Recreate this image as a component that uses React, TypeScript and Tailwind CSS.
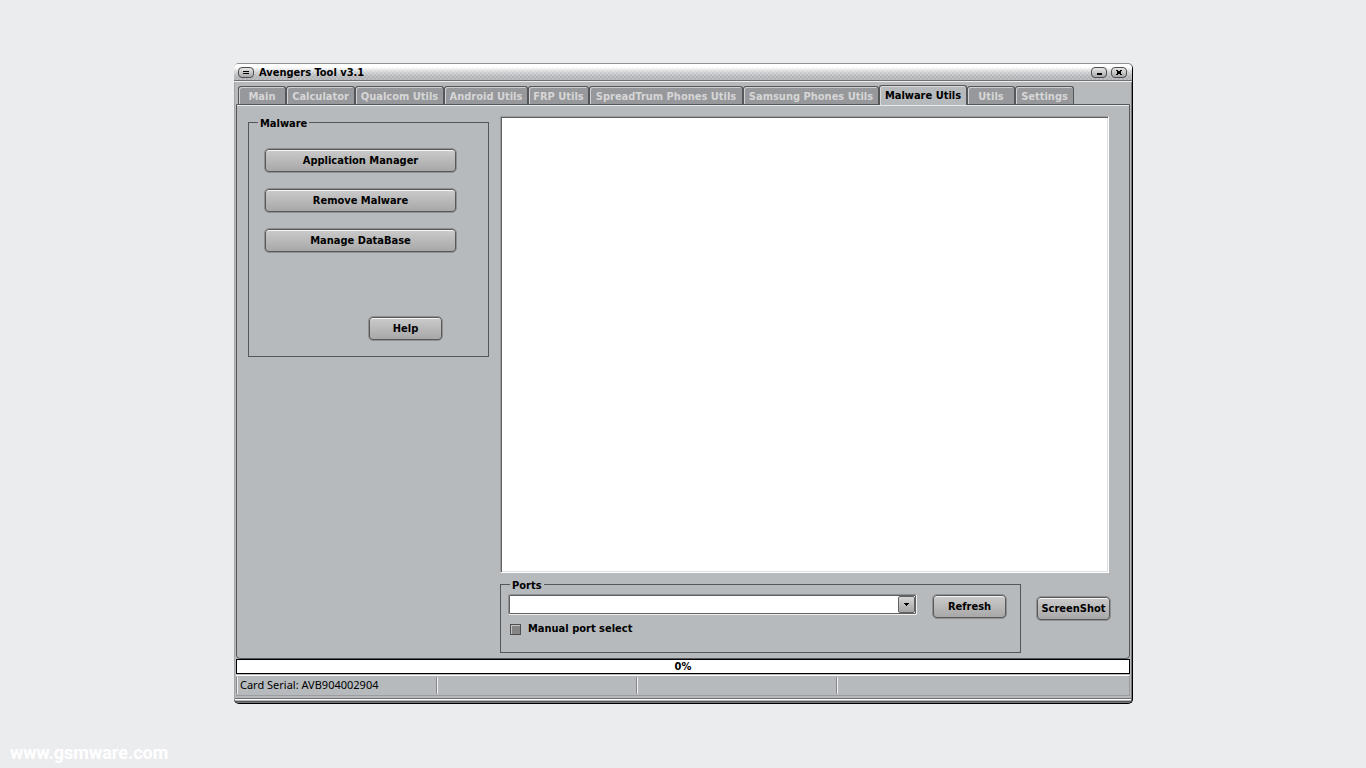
import type { ReactNode } from "react";

const tabs = [
	{ label: "Main", width: "w-12" },
	{ label: "Calculator", width: "w-[69px]" },
	{ label: "Qualcom Utils", width: "w-[89px]" },
	{ label: "Android Utils", width: "w-[84px]" },
	{ label: "FRP Utils", width: "w-[61px]" },
	{ label: "SpreadTrum Phones Utils", width: "w-[154px]" },
	{ label: "Samsung Phones Utils", width: "w-[136px]" },
	{ label: "Malware Utils", width: "w-[88px]" },
	{ label: "Utils", width: "w-12" },
	{ label: "Settings", width: "w-[59px]" },
];

const activeTab = "Malware Utils";

const SkinButton = ({
	label,
	className,
}: {
	label: string;
	className: string;
}) => (
	<button
		type="button"
		className={`h-[25px] shrink-0 rounded-[5px] border border-[#8e9092] bg-linear-to-b from-[#cdcdcd] to-[#a6a6a6] pt-px font-bold whitespace-nowrap shadow-[inset_0_0_0_1px_#58595b,inset_0_2px_0_#f4f4f4] ${className}`}
	>
		{label}
	</button>
);

const CaptionButton = ({ title, d }: { title: string; d: string }) => (
	<button
		type="button"
		aria-label={title}
		className="flex h-[11px] w-4 items-center justify-center rounded-[4px] border border-[#4d4e50] bg-linear-to-b from-[#e6e6e6] to-[#a9a9a9]"
	>
		<svg className="h-[7px] w-2" viewBox="0 0 8 7" shapeRendering="crispEdges">
			<path d={d} fill="#000" />
		</svg>
	</button>
);

const TitleBar = () => (
	<header className="flex h-4 items-center gap-1 rounded-t-[4px] bg-[linear-gradient(#fff_20%,#dcdddfc0_50%,#b8b9bca0_80%),repeating-conic-gradient(#a8a9ad_0_25%,#cbccce_0_50%)] bg-size-[auto,4px_4px] pt-px pr-[5px] pl-1">
		<CaptionButton title="Menu" d="M1 2h6v1H1zM1 4h6v1H1z" />
		<h1 className="ml-px flex-1 font-bold">Avengers Tool v3.1</h1>
		<CaptionButton title="Minimize" d="M2 4h5v2H2z" />
		<CaptionButton
			title="Close"
			d="M1 1h2v1H1zM5 1h2v1H5zM2 2h4v3H2zM1 5h2v1H1zM5 5h2v1H5z"
		/>
	</header>
);

const TabBar = () => (
	<nav
		role="tablist"
		className="flex h-6 items-end border-t border-[#6f7072] px-1 shadow-[inset_0_1px_0_#f0f0f0]"
	>
		{tabs.map((tab) => (
			<button
				key={tab.label}
				type="button"
				role="tab"
				aria-selected={tab.label === activeTab}
				className={`${tab.width} rounded-t-[3px] border border-b-0 border-[#555658] font-bold whitespace-nowrap ${
					tab.label === activeTab
						? "relative z-10 -mb-px h-5 bg-[#b6babd] text-black shadow-[inset_1px_1px_0_#d8dadb]"
						: "h-[18px] bg-[#97989c] pt-[2px] text-[#d6d6d6] shadow-[inset_1px_1px_0_#d0d1d4]"
				}`}
			>
				{tab.label}
			</button>
		))}
	</nav>
);

const StatusCell = ({
	className,
	children,
}: {
	className: string;
	children?: ReactNode;
}) => (
	<div
		className={`border-l border-[#85878a] pl-[3px] shadow-[inset_1px_0_0_#f0f0f0] ${className}`}
	>
		{children}
	</div>
);

const App = () => {
	return (
		<div className="flex min-h-screen flex-col bg-[#ebecee] font-['DejaVu_Sans_Condensed','DejaVu_Sans',sans-serif] text-[11px] leading-4 text-black">
			<main className="flex flex-1 flex-col items-center pt-16 pr-4 pl-[17px]">
				<section className="flex w-full max-w-[899px] flex-1 flex-col rounded-[5px] border-r border-b border-black bg-[#b6babd] shadow-[0_-1px_0_#8f9092,inset_1px_0_0_#a4a6a9,inset_-1px_0_0_#77797c,inset_0_-1px_0_#77797c]">
					<TitleBar />
					<TabBar />

					<div className="mx-[2px] flex flex-1 gap-[11px] rounded-b-[4px] border border-[#555658] pt-[11px] pr-[18px] pb-[5px] pl-[11px] shadow-[inset_0_1px_0_#e8e9ea]">
						<fieldset className="flex h-[241px] w-[241px] flex-col gap-[15px] border border-[#555658] px-[9px] pt-[19px]">
							<legend className="h-[13px] px-[2px] font-bold">Malware</legend>
							<SkinButton
								label="Application Manager"
								className="ml-[6px] w-[193px]"
							/>
							<SkinButton
								label="Remove Malware"
								className="ml-[6px] w-[193px]"
							/>
							<SkinButton
								label="Manage DataBase"
								className="ml-[6px] w-[193px]"
							/>
							<SkinButton label="Help" className="mt-12 ml-[110px] w-[75px]" />
						</fieldset>

						<div className="flex flex-1 flex-col">
							<textarea
								aria-label="Log"
								className="mr-[2px] flex-1 resize-none border border-t-[#9b9da0] border-r-white border-b-white border-l-[#9b9da0] bg-white shadow-[inset_1px_1px_0_#606163,inset_-1px_-1px_0_#dfe0e1] outline-none"
							/>
							<div className="mt-[5px] flex gap-[15px]">
								<fieldset className="h-[75px] flex-1 border border-[#555658] pt-[3px] pr-[13px] pl-[7px]">
									<legend className="ml-[2px] h-[13px] px-[2px] font-bold">
										Ports
									</legend>
									<div className="flex gap-[15px]">
										<div className="relative flex-1">
											<select
												aria-label="Port"
												className="h-[21px] w-full appearance-none rounded-[2px] border border-t-[#8e9092] border-r-[#f0f0f0] border-b-[#f0f0f0] border-l-[#8e9092] bg-white shadow-[inset_0_0_0_1px_#606163] outline-none"
											/>
											{/* ドロップダウンの矢印 */}
											<span className="pointer-events-none absolute top-[2px] right-[2px] flex h-[17px] w-[17px] items-center justify-center rounded-[2px] border border-[#606163] bg-linear-to-b from-[#d6d6d6] to-[#a6a6a6]">
												<svg
													className="h-[3px] w-[5px]"
													viewBox="0 0 5 3"
													shapeRendering="crispEdges"
												>
													<path d="M0 0h5v1H0zM1 1h3v1H1zM2 2h1v1H2z" />
												</svg>
											</span>
										</div>
										<SkinButton label="Refresh" className="w-[75px]" />
									</div>
									<label className="mt-[2px] ml-[2px] flex w-fit items-center gap-[7px] font-bold">
										<input
											type="checkbox"
											className="size-[11px] appearance-none border border-[#4d4e50] bg-[#858585] shadow-[inset_1px_1px_0_#c4c4c4]"
										/>
										Manual port select
									</label>
								</fieldset>
								<SkinButton label="ScreenShot" className="mt-[18px] w-[75px]" />
							</div>
						</div>
					</div>

					<div
						role="progressbar"
						aria-valuenow={0}
						className="mx-[2px] h-[15px] border border-black bg-white text-center leading-[13px] font-bold"
					>
						0%
					</div>

					<footer className="mx-[2px] mt-px flex h-[21px] border-t border-r border-b border-t-white border-r-[#9a9c9f] border-b-[#9a9c9f] py-px font-['Noto_Sans',sans-serif]">
						<StatusCell className="w-[200px]">
							Card Serial: AVB904002904
						</StatusCell>
						<StatusCell className="w-[200px]" />
						<StatusCell className="w-[200px]" />
						<StatusCell className="flex-1" />
					</footer>
					<div className="mx-px mt-[2px] mb-px h-1 border-t border-b border-t-[#6f7072] border-b-[#55575a] shadow-[inset_0_1px_0_#fff]" />
				</section>
			</main>
			<div className="flex h-16 items-end px-[10px] pb-1 font-['Roboto',sans-serif] text-lg leading-[22px] font-bold">
				<a href="#" className="text-white">
					www.gsmware.com
				</a>
			</div>
		</div>
	);
};

export default App;
